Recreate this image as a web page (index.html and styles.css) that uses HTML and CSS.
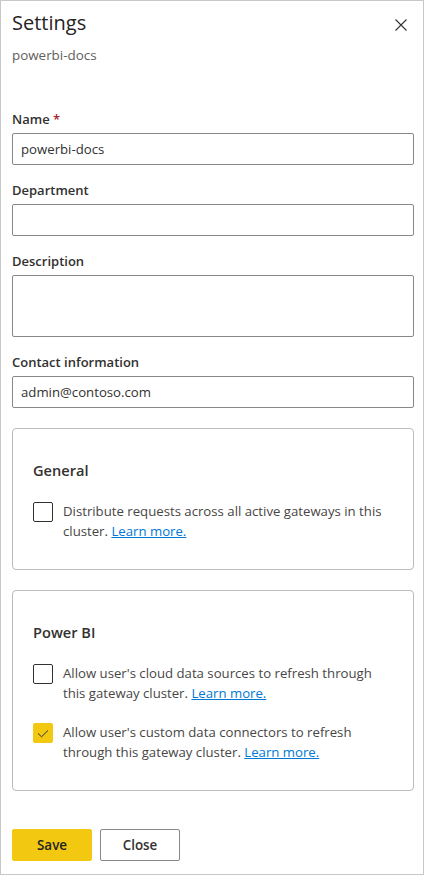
FILE: index.html
```html
<!DOCTYPE html>
<html lang="en">
<head>
<meta charset="utf-8">
<title>Settings</title>
<link rel="stylesheet" href="styles.css">
</head>
<body>
<div class="panel">
  <div class="header">
    <h1 class="title">Settings</h1>
    <button class="close-x" aria-label="Close">
      <svg width="12" height="12" viewBox="0 0 12 12"><path d="M0.5 0.5 L11.5 11.5 M11.5 0.5 L0.5 11.5" stroke="#323130" stroke-width="1.1" fill="none"/></svg>
    </button>
  </div>
  <div class="subtitle">powerbi-docs</div>

  <div class="form">
    <div class="field">
      <label class="label">Name <span class="req">*</span></label>
      <input class="input" type="text" value="powerbi-docs">
    </div>
    <div class="field">
      <label class="label">Department</label>
      <input class="input" type="text" value="">
    </div>
    <div class="field">
      <label class="label">Description</label>
      <textarea class="input textarea"></textarea>
    </div>
    <div class="field">
      <label class="label">Contact information</label>
      <input class="input" type="text" value="admin@contoso.com">
    </div>
  </div>

  <div class="group">
    <h2 class="group-title">General</h2>
    <div class="check-item">
      <span class="box"></span>
      <p class="check-text">Distribute requests across all active gateways in this cluster. <a href="#" class="link">Learn more.</a></p>
    </div>
  </div>

  <div class="group">
    <h2 class="group-title">Power BI</h2>
    <div class="check-list">
      <div class="check-item">
        <span class="box"></span>
        <p class="check-text">Allow user's cloud data sources to refresh through this gateway cluster. <a href="#" class="link">Learn more.</a></p>
      </div>
      <div class="check-item">
        <span class="box checked">
          <svg width="20" height="20" viewBox="0 0 20 20"><path d="M5 10.5 L8.5 13.8 L15 7.5" stroke="#323130" stroke-width="1" fill="none"/></svg>
        </span>
        <p class="check-text">Allow user's custom data connectors to refresh through this gateway cluster. <a href="#" class="link">Learn more.</a></p>
      </div>
    </div>
  </div>

  <div class="actions">
    <button class="btn btn-primary">Save</button>
    <button class="btn btn-default">Close</button>
  </div>
</div>
</body>
</html>
```

FILE: styles.css
```css
* { box-sizing: border-box; }
html, body {
  margin: 0;
  padding: 0;
  background: #ffffff;
}
body {
  font-family: "Open Sans", "Liberation Sans", sans-serif;
  color: #323130;
  font-size: 13.2px;
}
.panel {
  width: 424px;
  height: 875px;
  border: 1px solid #c8c8c8;
  padding: 8px 9px 0 11px;
  overflow: hidden;
}
.header {
  display: flex;
  justify-content: space-between;
  align-items: flex-start;
}
.title {
  margin: 0;
  font-size: 20px;
  line-height: 28px;
  font-weight: 400;
  color: #252423;
}
.close-x {
  width: 24px;
  height: 24px;
  margin-top: 4px;
  margin-right: 1px;
  padding: 0;
  border: none;
  background: transparent;
  display: flex;
  align-items: center;
  justify-content: center;
}
.subtitle {
  margin-top: 8px;
  font-size: 13.4px;
  line-height: 20px;
  color: #605e5c;
}
.form {
  margin-top: 44px;
  display: flex;
  flex-direction: column;
  gap: 15px;
}
.field {
  display: flex;
  flex-direction: column;
}
.label {
  font-size: 13px;
  line-height: 20px;
  font-weight: 600;
  color: #323130;
  margin-bottom: 4px;
}
.req {
  color: #a4262c;
}
.input {
  width: 100%;
  height: 32px;
  border: 1px solid #8a8886;
  border-radius: 2px;
  padding: 0 8px;
  font-family: "Open Sans", "Liberation Sans", sans-serif;
  font-size: 13.2px;
  color: #323130;
  background: #ffffff;
  outline: none;
}
.textarea {
  height: 62px;
  resize: none;
  padding: 6px 8px;
  display: block;
}
.group {
  margin-top: 20px;
  border: 1px solid #bebbb8;
  border-radius: 4px;
  padding: 30px 20px 28px 20px;
}
.group-title {
  margin: 0 0 20px 0;
  font-size: 14.6px;
  line-height: 22px;
  font-weight: 600;
  color: #323130;
}
.check-list {
  display: flex;
  flex-direction: column;
  gap: 19px;
}
.check-item {
  display: flex;
  align-items: flex-start;
  gap: 10px;
}
.box {
  flex: 0 0 20px;
  width: 20px;
  height: 20px;
  margin-top: 1px;
  border: 1px solid #323130;
  border-radius: 2px;
  background: #ffffff;
  display: flex;
  align-items: center;
  justify-content: center;
}
.box.checked {
  background: #f2c811;
  border-color: #f2c811;
}
.box svg {
  flex: none;
}
.check-text {
  margin: 0;
  font-size: 13.2px;
  line-height: 20px;
  color: #484644;
}
.link {
  color: #0078d4;
  text-decoration: underline;
}
.actions {
  margin-top: 38px;
  display: flex;
  gap: 8px;
}
.btn {
  width: 80px;
  height: 32px;
  border-radius: 2px;
  font-family: "Open Sans", "Liberation Sans", sans-serif;
  font-size: 13.4px;
  font-weight: 600;
  padding: 0;
}
.btn-primary {
  background: #f2c811;
  border: 1px solid #f2c811;
  color: #252423;
}
.btn-default {
  background: #ffffff;
  border: 1px solid #8a8886;
  color: #323130;
}
```
